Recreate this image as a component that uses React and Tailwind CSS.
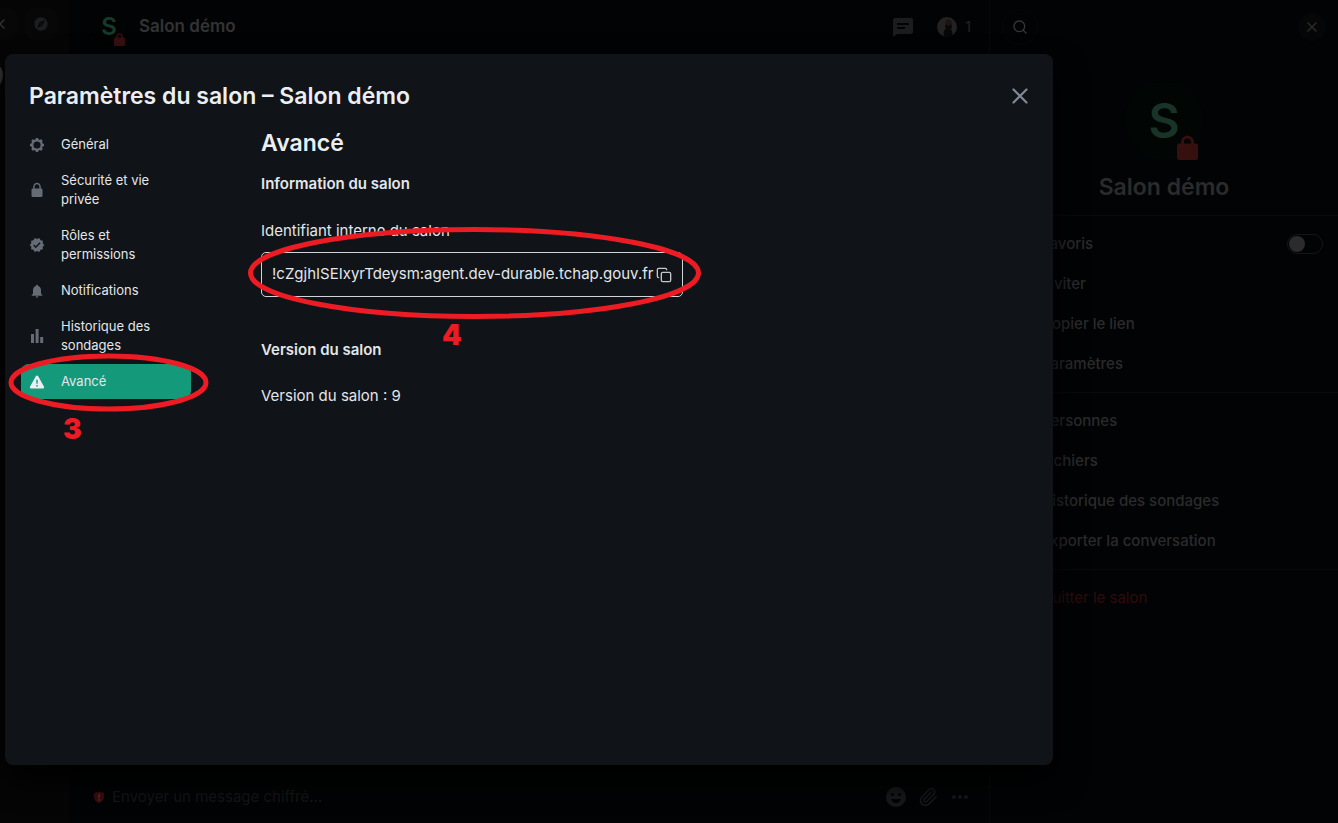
import React from "react";
import { MdExplore, MdVerified, MdNotifications, MdEmojiEmotions, MdMoreHoriz } from "react-icons/md";
import { Search, X, Copy, Paperclip, ChevronLeft } from "lucide-react";

function Gear({ className }) {
  const teeth = [0, 45, 90, 135, 180, 225, 270, 315];
  return (
    <svg viewBox="0 0 16 16" className={className} fill="currentColor" aria-hidden="true">
      <circle cx="8" cy="8" r="4.700" fill="none" stroke="currentColor" strokeWidth="2.200" />
      {teeth.map((a) => (
        <path key={a} d="M5.900 3.400 7 1h2l1.100 2.400z" transform={`rotate(${a} 8 8)`} />
      ))}
    </svg>
  );
}

function Lock({ className }) {
  return (
    <svg viewBox="0 0 16 16" className={className} aria-hidden="true">
      <path d="M4.900 8V5a3.100 3.600 0 0 1 6.200 0v3" fill="none" stroke="currentColor" strokeWidth="1.500" />
      <rect x="2.500" y="6.500" width="11" height="8.500" rx="1.300" fill="currentColor" />
    </svg>
  );
}

function Warning({ className }) {
  return (
    <svg viewBox="0 0 16 16" className={className} fill="currentColor" aria-hidden="true">
      <path
        fillRule="evenodd"
        d="M6.800 2.200a1.400 1.400 0 0 1 2.400 0l5.700 10.300a1.400 1.400 0 0 1-1.200 2.100H2.300a1.400 1.400 0 0 1-1.200-2.100zM7.200 5.800l.2 4h1.200l.2-4zM8 10.900a.9.900 0 1 0 0 1.800.9.900 0 0 0 0-1.800z"
      />
    </svg>
  );
}

function Bars({ className }) {
  return (
    <svg viewBox="0 0 16 16" className={className} fill="currentColor" aria-hidden="true">
      <rect x="2" y="6" width="3" height="9" />
      <rect x="6.600" y="1" width="3" height="14" />
      <rect x="11.200" y="9" width="3" height="6" />
    </svg>
  );
}

function Threads({ className }) {
  return (
    <svg viewBox="0 0 24 24" className={className} fill="currentColor" aria-hidden="true">
      <path
        fillRule="evenodd"
        d="M4 3h16a2 2 0 0 1 2 2v12a2 2 0 0 1-2 2H6l-4 3V5a2 2 0 0 1 2-2zM6 8v2h12V8zM6 12v2h8v-2z"
      />
    </svg>
  );
}

function Bag({ className }) {
  return (
    <svg viewBox="0 0 21 25" className={className} aria-hidden="true">
      <path d="M5.500 12V7a5 5 0 0 1 10 0v5" fill="none" stroke="currentColor" strokeWidth="3" />
      <rect y="8.500" width="21" height="16.500" rx="2" fill="currentColor" />
    </svg>
  );
}

function ShieldAlert({ className }) {
  return (
    <svg viewBox="0 0 10 12" className={className} aria-hidden="true">
      <path d="M5 .5 10 2v4c0 3-2 5-5 6C2 11 0 9 0 6V2z" fill="#3d0c0f" />
      <path d="M4.300 3h1.400v4H4.300zM4.300 8h1.400v1.400H4.300z" fill="#4a3a3a" />
    </svg>
  );
}

const tabs = [
  { label: "Général", Icon: Gear },
  { label: "Sécurité et vie privée", Icon: Lock },
  { label: "Rôles et permissions", Icon: MdVerified },
  { label: "Notifications", Icon: MdNotifications },
  { label: "Historique des sondages", Icon: Bars },
  { label: "Avancé", Icon: Warning, active: true },
];

function MenuItem({ children }) {
  return (
    <button type="button" className="flex h-10 w-full items-center pl-[51px] text-left">
      {children}
    </button>
  );
}

function SpacePanel() {
  return (
    <aside className="w-[69px] shrink-0 overflow-hidden bg-[#050505]">
      <div className="flex items-center gap-2 pt-2">
        <button type="button" aria-label="Réduire" className="flex h-8 w-[17px] items-center justify-start rounded-r-lg bg-[#070707] text-[#333]">
          <ChevronLeft className="-ml-1.5 size-4" />
        </button>
        <button type="button" aria-label="Explorer" className="flex size-8 items-center justify-center rounded-lg bg-[#070707] text-[#1b1d20]">
          <MdExplore className="size-4" />
        </button>
      </div>
      <div className="-ml-7 mt-5 size-[31px] rounded-full bg-[#333]" />
    </aside>
  );
}

function Conversation() {
  return (
    <main className="flex min-w-0 flex-1 flex-col bg-[#020304] font-medium">
      <header className="flex h-[54px] items-center justify-between pl-[22px] pr-[18px]">
        <div className="flex items-center gap-3">
          <div className="relative flex size-9 items-center justify-center rounded-full bg-[#010402] text-2xl font-semibold text-[#17392b]">
            <span>S</span>
            <Bag className="absolute -bottom-px right-0.5 h-[13px] w-[11px] text-[#35100f]" />
          </div>
          <h1 className="text-[17px] font-semibold text-[#333]">Salon démo</h1>
        </div>
        <div className="flex items-center text-[#1b1c1e]">
          <button type="button" aria-label="Fils de discussion">
            <Threads className="size-6" />
          </button>
          <button type="button" className="ml-[22px] flex items-center gap-2 text-sm text-[#202020]">
            <svg viewBox="0 0 20 20" className="size-5" aria-hidden="true">
              <circle cx="10" cy="10" r="10" fill="#222" />
              <path d="M7 19.500c-1-5 0-8 4-8s5 4 4 7l-3 1.400z" fill="#080707" />
              <ellipse cx="11.500" cy="7" rx="3.300" ry="4.500" fill="#1c1410" />
              <path d="M8 7.500c1 1.500 6 1.500 7 0 0 4-1 6-3.500 6S8 11.500 8 7.500z" fill="#0b0706" />
            </svg>
            1
          </button>
        </div>
      </header>
      <div className="flex-1" />
      <footer className="flex h-[52px] items-center gap-2 pl-[25px] pr-[17px]">
        <ShieldAlert className="h-3 w-2.5" />
        <input
          aria-label="Message"
          placeholder="Envoyer un message chiffré…"
          className="min-w-0 flex-1 bg-transparent text-[15px] font-normal outline-none placeholder:text-[#151617]"
        />
        <div className="flex items-center gap-2 text-[#17181a]">
          <button type="button" aria-label="Émoji"><MdEmojiEmotions className="size-6" /></button>
          <button type="button" aria-label="Joindre"><Paperclip className="size-6 p-0.5" /></button>
          <button type="button" aria-label="Plus"><MdMoreHoriz className="size-6" /></button>
        </div>
      </footer>
    </main>
  );
}

function RoomInfo() {
  return (
    <aside className="w-[349px] shrink-0 border-l border-[#08090a] bg-[#020305] text-[15px] font-medium text-[#2b2b2b]">
      <header className="flex h-[54px] items-center justify-between px-3">
        <button type="button" aria-label="Rechercher" className="flex size-9 items-center justify-center rounded-full border border-[#060708] text-[#363636]">
          <Search className="size-4" />
        </button>
        <button type="button" aria-label="Fermer le panneau" className="flex size-7 items-center justify-center rounded-full bg-[#060606] text-[#292929]">
          <X className="size-4" strokeWidth={2.5} />
        </button>
      </header>
      <section className="flex flex-col items-center border-b border-[#090a0b] pb-3 pt-[27px]">
        <div className="relative flex size-20 items-center justify-center rounded-full bg-[#010503] text-5xl font-semibold text-[#193328]">
          <span>S</span>
          <Bag className="absolute bottom-px right-1.5 h-[25px] w-[21px] text-[#35100f]" />
        </div>
        <h2 className="mt-2.5 text-[23px] leading-8 font-semibold">Salon démo</h2>
      </section>
      <div className="border-b border-[#090a0b] py-2">
        <label className="flex h-10 items-center justify-between pl-[51px] pr-[15px]">
          Favoris
          <input type="checkbox" role="switch" className="peer sr-only" />
          <span className="flex h-5 w-9 items-center rounded-full border border-[#151617] pl-px">
            <span className="size-4 rounded-full bg-[#2b2b2b]" />
          </span>
        </label>
        <MenuItem>Inviter</MenuItem>
        <MenuItem>Copier le lien</MenuItem>
        <MenuItem>Paramètres</MenuItem>
      </div>
      <div className="border-b border-[#090a0b] py-2">
        <MenuItem>Personnes</MenuItem>
        <MenuItem>Fichiers</MenuItem>
        <MenuItem>Historique des sondages</MenuItem>
        <MenuItem>Exporter la conversation</MenuItem>
      </div>
      <div className="py-2 font-normal text-[#300b0d]">
        <MenuItem>Quitter le salon</MenuItem>
      </div>
    </aside>
  );
}

function SettingsDialog() {
  return (
    <section
      role="dialog"
      aria-labelledby="settings-title"
      className="flex min-w-0 flex-1 flex-col rounded-lg bg-[#101317] px-4 pt-6 text-[15px] text-[#e3e6ea] shadow-[2px_15px_30px_0_#000000]"
    >
      <header className="flex h-9 items-center justify-between pl-2 pr-1">
        <h2 id="settings-title" className="text-[23px] font-semibold text-[#ebeef2]">
          Paramètres du salon – Salon démo
        </h2>
        <button type="button" aria-label="Fermer" className="text-[#818a95]">
          <X className="size-[26px]" strokeWidth={2} />
        </button>
      </header>
      <div className="flex gap-[70px] pt-[13px]">
        <nav className="flex w-[170px] shrink-0 flex-col gap-px">
          {tabs.map(({ label, Icon, active }) => (
            <button
              key={label}
              type="button"
              className={
                active
                  ? "flex items-center gap-4 rounded-lg bg-[#14997a] px-2 py-2 text-left text-[13px] leading-[19px]"
                  : "flex items-center gap-4 rounded-lg px-2 py-2 text-left text-[13px] leading-[19px]"
              }
            >
              <Icon className={active ? "size-4 shrink-0 text-[#ebeef2]" : "size-4 shrink-0 text-[#656c76]"} />
              <span className="w-[100px]">{label}</span>
            </button>
          ))}
        </nav>
        <div className="min-w-0 flex-1">
          <h3 className="text-[23px] leading-8 font-semibold text-[#ebeef2]">Avancé</h3>
          <h4 className="mt-[13px] leading-6 font-semibold">Information du salon</h4>
          <p className="mt-[23px] leading-6">Identifiant interne du salon</p>
          <div className="mt-[9px] flex h-[45px] w-[422px] items-center justify-between rounded-[5px] border border-[#d0d3d8] px-2.5">
            <span>!cZgjhISEIxyrTdeysm:agent.dev-durable.tchap.gouv.fr</span>
            <button type="button" aria-label="Copier" className="text-[#c3c7cc]">
              <Copy className="size-4" />
            </button>
          </div>
          <h4 className="mt-[41px] leading-6 font-semibold">Version du salon</h4>
          <p className="mt-[22px] leading-6">Version du salon : 9</p>
        </div>
      </div>
    </section>
  );
}

function Annotations() {
  return (
    <svg
      className="pointer-events-none absolute left-0 top-0 h-[460px] w-[720px] font-['Inter',sans-serif] text-[28px] font-black"
      viewBox="0 0 720 460"
      fill="#ed1c24"
    >
      <g fill="none" stroke="#ed1c24" strokeWidth="5">
        <ellipse cx="108.500" cy="382.500" rx="97.500" ry="26.500" />
        <ellipse cx="474.500" cy="273" rx="224" ry="43.500" />
      </g>
      <text x="63" y="439">3</text>
      <text x="442" y="345">4</text>
    </svg>
  );
}

export default function App() {
  return (
    <div className="relative flex min-h-screen overflow-hidden bg-black font-['Inter',sans-serif]">
      <SpacePanel />
      <Conversation />
      <RoomInfo />
      <div className="absolute inset-0 flex pb-[58px] pl-[5px] pr-[285px] pt-[54px]">
        <SettingsDialog />
      </div>
      <Annotations />
    </div>
  );
}
